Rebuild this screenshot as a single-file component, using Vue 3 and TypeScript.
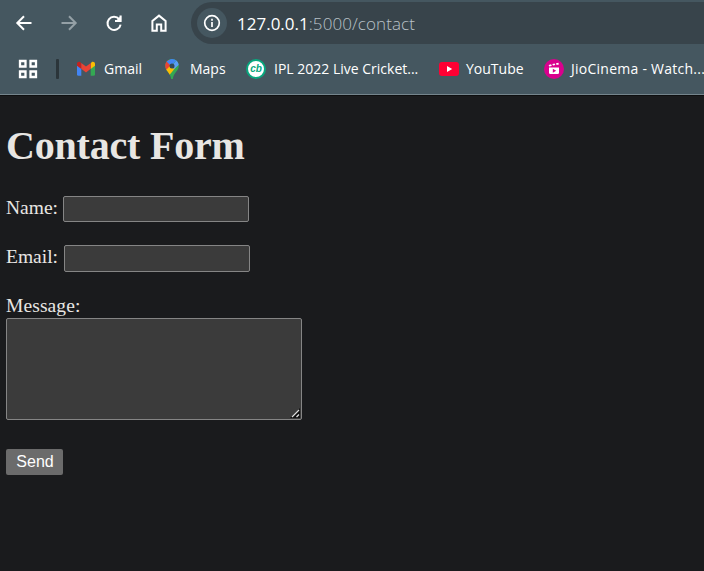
<script setup lang="ts">
import { ref } from 'vue'

interface Bookmark {
  id: string
  label: string
}

const bookmarks: Bookmark[] = [
  { id: 'gmail', label: 'Gmail' },
  { id: 'maps', label: 'Maps' },
  { id: 'cricket', label: 'IPL 2022 Live Cricket...' },
  { id: 'youtube', label: 'YouTube' },
  { id: 'cinema', label: 'JioCinema - Watch...' },
]

const name = ref('')
const email = ref('')
const message = ref('')
</script>

<template>
  <div class="window">
    <header class="chrome">
      <div class="toolbar">
        <nav class="nav">
          <svg class="ico" viewBox="0 0 18 18"><path d="M16.5 9H3M9 2.3 2.3 9 9 15.7" /></svg>
          <svg class="ico dim" viewBox="0 0 18 18"><path d="M1.5 9H15M9 2.3 15.7 9 9 15.7" /></svg>
          <svg class="ico" viewBox="0 0 18 18">
            <path d="M14.2 5.2A6.6 6.6 0 1 0 15.6 10.6" /><path d="M15.5 1.5V7H10" /><path class="solid" d="M16.3 1.5V7.7H10z" />
          </svg>
          <svg class="ico" viewBox="0 0 18 18"><path d="M2.4 16.7V6.9L9 1.6l6.6 5.3v9.8h-4.4v-6.1H6.8v6.1z" /></svg>
        </nav>
        <div class="address">
          <span class="info">
            <svg viewBox="0 0 18 18"><circle cx="9" cy="9" r="7.3" /><path d="M9 8v5M9 4.8v1.9" /></svg>
          </span>
          <span class="url"><span class="host">127.0.0.1</span><span class="path">:5000/contact</span></span>
        </div>
      </div>
      <div class="bookmarks">
        <svg class="apps" viewBox="0 0 20 20">
          <path d="M2 2h5.5v5.5H2zM12.5 2H18v5.5h-5.5zM2 12.5h5.5V18H2zM12.5 12.5H18V18h-5.5z" />
        </svg>
        <span class="divider"></span>
        <div v-for="b in bookmarks" :key="b.id" class="bookmark" :class="b.id">
          <svg v-if="b.id === 'gmail'" class="fav" viewBox="0 0 20 20">
            <path fill="#4285f4" d="M1 6l4.3 3.2v7.6H2.4A1.4 1.4 0 0 1 1 15.4z" />
            <path fill="#34a853" d="M19 6l-4.3 3.2v7.6h2.9a1.4 1.4 0 0 0 1.4-1.4z" />
            <path fill="#fbbc04" d="M14.7 5v5L19 6.7V5c0-2-2.1-2.7-3.5-1.7z" />
            <path fill="#c5221f" d="M5.3 5v5L1 6.7V5c0-2 2.1-2.7 3.5-1.7z" />
            <path fill="#ea4335" d="M5.3 3.9 10 7.5l4.7-3.6V9.8L10 13.4 5.3 9.8z" />
          </svg>
          <svg v-else-if="b.id === 'maps'" class="fav" viewBox="0 0 20 20">
            <clipPath id="pin"><path d="M10 0C6 0 3.2 3 3.2 6.8c0 5 5 6.7 6 13.2h1.6c1-6.5 6-8.2 6-13.2C16.8 3 14 0 10 0z" /></clipPath>
            <g clip-path="url(#pin)">
              <path fill="#34a853" d="M0 0h20v20H0z" />
              <path fill="#fbbc04" d="M0 14 10 4l4 4L5 19z" />
              <path fill="#ea4335" d="M0 0h6l4 5-8 8z" />
              <path fill="#4285f4" d="M4.5 2.5 9 7l6-6L10-1z" />
              <path fill="#5b9cf5" d="m9 8 5.8-7L18 5l-6 5z" />
            </g>
            <circle cx="10" cy="6.9" r="2.5" fill="#344955" />
          </svg>
          <svg v-else-if="b.id === 'cricket'" class="fav" viewBox="0 0 20 20">
            <circle cx="10" cy="10" r="9" fill="#fff" stroke="#08a77e" stroke-width="2" />
            <text x="10" y="13.3" text-anchor="middle" class="cb">cb</text>
          </svg>
          <svg v-else-if="b.id === 'youtube'" class="fav" viewBox="0 0 20 20">
            <rect y="3" width="20" height="14" rx="3" fill="#ff0033" /><path fill="#fff" d="m8 7 5.2 3L8 13z" />
          </svg>
          <svg v-else class="fav" viewBox="0 0 20 20">
            <circle cx="10" cy="10" r="10" fill="#d9008d" />
            <path fill="#fff" d="M5 8.5h10v5.2a1.3 1.3 0 0 1-1.3 1.3H6.3A1.3 1.3 0 0 1 5 13.7zM4.7 6l2.4-.7.7 1.6-2.7.7zM8.3 5l2.3-.6.7 1.7-2.3.5zM12 4.3l2.4-.6.5 1.7-2.3.5z" />
            <path fill="#d9008d" d="m8.800 9.700 3.400 2-3.400 2z" />
          </svg>
          <span class="label">{{ b.label }}</span>
        </div>
      </div>
    </header>
    <main class="page">
      <h1>Contact Form</h1>
      <form @submit.prevent>
        <div class="row"><label for="name">Name:</label><input id="name" v-model="name" type="text" /></div>
        <div class="row"><label for="email">Email:</label><input id="email" v-model="email" type="text" /></div>
        <label class="message-label" for="message">Message:</label>
        <div class="area">
          <textarea id="message" v-model="message"></textarea>
          <svg class="grip" viewBox="0 0 10 10">
            <path class="edge" d="M0 10 10 0v10z" /><path class="line" d="M2 9 9 2M6.5 9 9 6.5" />
          </svg>
        </div>
        <button type="submit">Send</button>
      </form>
    </main>
  </div>
</template>

<style>
body {
  background: #1a1b1d;
  overflow: hidden;
}
</style>

<style scoped>
.window {
  width: 704px;
  height: 571px;
  overflow: hidden;
  background: #1a1b1d;
}
.chrome {
  box-sizing: border-box;
  height: 96px;
  background: #455760;
  border-bottom: 1px solid #0e0f10;
  box-shadow: inset 0 -1px #75858c;
  font-family: "Open Sans", "Noto Sans", sans-serif;
  color: #fff;
}
.toolbar {
  display: flex;
  height: 44px;
  padding-top: 2px;
  box-sizing: border-box;
}
.nav {
  display: flex;
  gap: 27px;
  padding: 12px 0 0 14.5px;
  width: 176px;
  box-sizing: border-box;
}
.ico {
  flex: none;
  width: 18px;
  height: 18px;
  fill: none;
  stroke: #fff;
  stroke-width: 2;
}
.ico .solid {
  fill: #fff;
  stroke: none;
}
.dim {
  stroke: #94a0a6;
}
.address {
  display: flex;
  align-items: center;
  flex: 1;
  height: 42px;
  margin-left: 15px;
  padding-left: 6px;
  box-sizing: border-box;
  border-radius: 21px 0 0 21px;
  background: #38444b;
}
.info {
  display: flex;
  align-items: center;
  justify-content: center;
  width: 30px;
  height: 30px;
  border-radius: 50%;
  background: #455760;
}
.info svg {
  width: 18px;
  height: 18px;
  fill: none;
  stroke: #fff;
  stroke-width: 1.7;
}
.url {
  margin-left: 10px;
  font-size: 17px;
  font-weight: 300;
  white-space: nowrap;
}
.host {
  font-weight: 400;
}
.path {
  color: #b8c2c8;
  letter-spacing: 0.08px;
}
.bookmarks {
  display: flex;
  align-items: center;
  height: 50px;
  padding-left: 18px;
}
.apps {
  flex: none;
  width: 20px;
  height: 20px;
  fill: none;
  stroke: #fff;
  stroke-width: 2.3;
}
.divider {
  flex: none;
  width: 3px;
  height: 20px;
  margin: 0 17px 0 18px;
  border-radius: 1px;
  background: #2b353a;
}
.bookmark {
  display: flex;
  flex: none;
  align-items: center;
  gap: 8px;
}
.gmail {
  width: 86px;
}
.maps {
  width: 84px;
}
.cricket {
  width: 193px;
}
.youtube {
  width: 105px;
}
.youtube,
.cinema {
  gap: 7px;
}
.fav {
  flex: none;
  width: 20px;
  height: 20px;
}
.cb {
  font: italic bold 10px "Liberation Sans", sans-serif;
  fill: #08a77e;
}
.label {
  font-size: 14px;
  line-height: 20px;
  white-space: nowrap;
}
.cinema .label {
  letter-spacing: 0.25px;
}
.page {
  padding: 26px 6px 0;
  color: #e8e6e3;
  font-family: "Liberation Serif", serif;
  font-size: 19.5px;
}
h1 {
  margin: 0;
  height: 74px;
  font-size: 40px;
  line-height: 48px;
  letter-spacing: -0.2px;
}
.row {
  display: flex;
  align-items: flex-start;
  gap: 5px;
  height: 49px;
}
label {
  line-height: 24px;
}
input,
textarea {
  box-sizing: border-box;
  display: block;
  margin: 0;
  border: 1px solid #858585;
  border-radius: 2px;
  background: #3b3b3b;
  color: #e8e6e3;
  outline: none;
}
input {
  width: 186px;
  height: 27px;
}
#name {
  height: 26px;
}
#email {
  margin-left: 1px;
}
.message-label {
  display: block;
  height: 24px;
  letter-spacing: 0.1px;
}
.area {
  position: relative;
  width: 296px;
  height: 102px;
}
textarea {
  width: 100%;
  height: 100%;
  resize: none;
}
.grip {
  position: absolute;
  right: 2px;
  bottom: 2px;
  width: 10px;
  height: 10px;
}
.edge {
  fill: #111;
}
.line {
  stroke: #ddd;
  stroke-width: 1.3;
}
button {
  display: block;
  width: 57px;
  height: 26px;
  margin-top: 29px;
  padding: 0 0 0 1px;
  border: 0;
  border-radius: 2px;
  background: #6b6b6b;
  color: #fff;
  font: 16px/26px "Liberation Sans", sans-serif;
}
</style>
